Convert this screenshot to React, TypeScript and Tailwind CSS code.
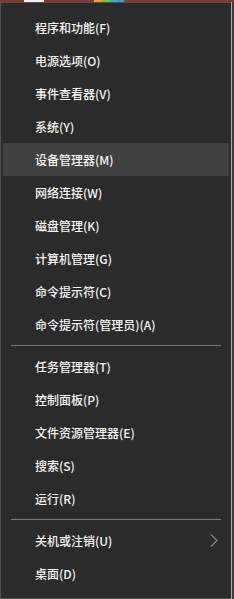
import React from "react";

const group1 = [
  "程序和功能(F)",
  "电源选项(O)",
  "事件查看器(V)",
  "系统(Y)",
  "设备管理器(M)",
  "网络连接(W)",
  "磁盘管理(K)",
  "计算机管理(G)",
  "命令提示符(C)",
  "命令提示符(管理员)(A)",
];
const group2 = ["任务管理器(T)", "控制面板(P)", "文件资源管理器(E)", "搜索(S)", "运行(R)"];

function Row({ label, active, sub }: { label: string; active?: boolean; sub?: boolean }) {
  return (
    <div
      className={
        "h-[33px] flex items-center justify-between pl-[32px] pr-[10px] " +
        (active ? "bg-[#414141]" : "")
      }
    >
      <span className="text-[12px] leading-none font-medium text-[#f4f4f4]">{label}</span>
      {sub && (
        <svg width="8" height="13" viewBox="0 0 8 13" className="mr-[1px]">
          <path d="M1 0.5 L7 6.5 L1 12.5" fill="none" stroke="#cfcfcf" strokeWidth="1" />
        </svg>
      )}
    </div>
  );
}

function Sep() {
  return (
    <div className="h-[9px] flex items-center px-[8px]">
      <div className="h-px w-full bg-[#7a7a7a]" />
    </div>
  );
}

export default function App() {
  return (
    <div
      className="w-[234px] h-[599px] flex flex-col bg-[#2b2b2b] overflow-hidden"
      style={{ fontFamily: '"Noto Sans CJK SC", "Noto Sans", sans-serif' }}
    >
      <div className="h-[2px] flex shrink-0 bg-[#7d3d2c]">
        <div className="w-[24px]" />
        <div className="w-[20px] bg-[#f2f2f2]" />
        <div className="w-[50px]" />
        <div className="w-[8px] bg-[#e2a13b]" />
        <div className="w-[8px] bg-[#7cc24a]" />
        <div className="w-[8px] bg-[#3aa7e0]" />
        <div className="w-[6px] bg-[#5a8ad0]" />
      </div>
      <div className="flex flex-1 min-h-0">
        <div className="flex-1 flex flex-col border-t border-l border-b border-[#505050] pt-[8px] pl-[2px] pr-[2px]">
          {group1.map((l, i) => (
            <Row key={l} label={l} active={i === 4} />
          ))}
          <Sep />
          {group2.map((l) => (
            <Row key={l} label={l} />
          ))}
          <Sep />
          <Row label="关机或注销(U)" sub />
          <Row label="桌面(D)" />
        </div>
        <div className="w-[1px] bg-[#b8a4a4]" />
        <div className="w-[2px] bg-[#3a3a40]" />
      </div>
    </div>
  );
}
